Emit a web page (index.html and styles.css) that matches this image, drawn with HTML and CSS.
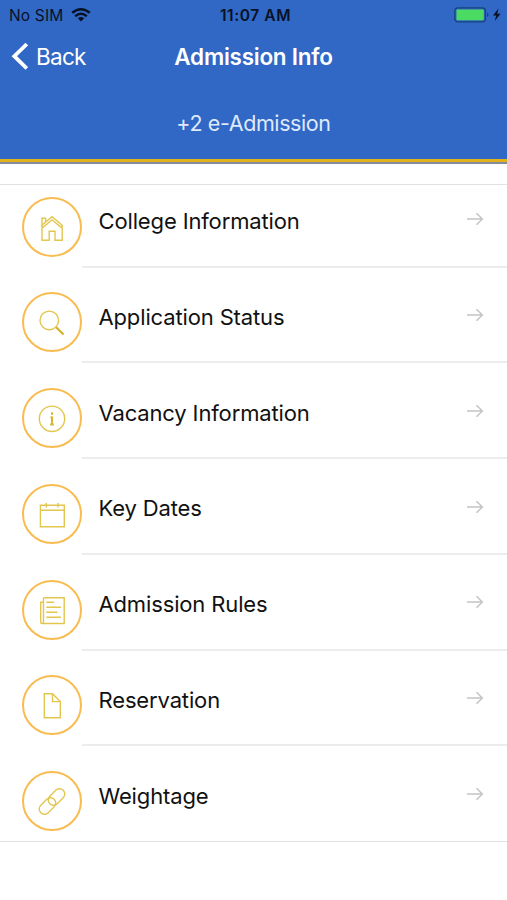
FILE: index.html
```
<!DOCTYPE html>
<html lang="en">
<head>
<meta charset="utf-8">
<title>Admission Info</title>
<link rel="stylesheet" href="styles.css">
</head>
<body>
<header class="header">
  <div class="status">
    <div class="carrier"><span class="carrier-name">No SIM</span>
      <svg width="20" height="14" viewBox="0 0 20 14" fill="none" stroke="#071225" stroke-width="2.5"><path d="M1.2 4.8Q10-2.2 18.8 4.8M4.2 8.2Q10 3.4 15.8 8.2"/><path d="M6.8 10.3Q10 7.6 13.2 10.3L10 13.6Z" fill="#071225" stroke="none"/></svg>
    </div>
    <div class="clock">11:07 AM</div>
    <svg class="battery" width="48" height="16" viewBox="0 0 48 16"><rect x=".8" y=".8" width="30.6" height="14" rx="3" fill="none" stroke="#17437f" stroke-width="1.3"/><rect x="2.5" y="2.5" width="27.3" height="10.7" rx="1" fill="#4cdb62"/><path d="M33 5.5Q36 7.8 33 10Z" fill="#17437f"/><path d="M44.5 1.5L39 8.5H42.3L40.7 14L46.5 6.7H43.2Z" fill="#071225"/></svg>
  </div>
  <nav class="nav">
    <a class="back"><svg width="18" height="28" viewBox="0 0 18 28"><path d="M16.8 2L4.3 14.2L16.8 26.4" fill="none" stroke="#fff" stroke-width="3.8"/></svg><span>Back</span></a>
    <h1 class="title">Admission Info</h1>
  </nav>
  <div class="subtitle">+2 e-Admission</div>
</header>
<svg class="defs" width="0" height="0"><symbol id="arrow" viewBox="0 0 18 14"><path d="M1 7H16M10.5 1.2L16.3 7L10.5 12.8"/></symbol></svg>
<main class="list">
  <div class="row">
    <svg class="icon" viewBox="2 2 56 56"><path d="M19 29L30 19.6L41 29M20 28.2V43.3H27.2V34.2H33V43.3H40.2V28.2M20.8 30.6L30 22.8L39.4 30.6M20 28V21.3H23.6V24.7"/></svg>
    <div class="body"><span class="label">College Information</span><svg class="arrow"><use href="#arrow"/></svg></div>
  </div>
  <div class="row">
    <svg class="icon" viewBox="2 2 56 56"><circle cx="27.3" cy="28.4" r="9.3"/><path class="handle" d="M34.2 35.2L41.5 42.5"/></svg>
    <div class="body"><span class="label">Application Status</span><svg class="arrow"><use href="#arrow"/></svg></div>
  </div>
  <div class="row">
    <svg class="icon" viewBox="2 2 56 56"><circle cx="30" cy="30.8" r="12.7"/><path class="info" d="M30 28.5V37M28.5 29.2H30M28.2 36.4H31.8M30 24.3V26.7"/></svg>
    <div class="body"><span class="label">Vacancy Information</span><svg class="arrow"><use href="#arrow"/></svg></div>
  </div>
  <div class="row">
    <svg class="icon" viewBox="2 2 56 56"><path d="M18.4 21.2H42.3V42.7H18.4ZM18.4 26.2H42.3M24.3 19V23.5M36 19V23.5"/></svg>
    <div class="body"><span class="label">Key Dates</span><svg class="arrow"><use href="#arrow"/></svg></div>
  </div>
  <div class="row">
    <svg class="icon" viewBox="2 2 56 56"><path d="M21.5 17.8H42.2V43.5H20.2Q18.7 43.5 18.7 42V22.2H21.5M21.5 17.8V41.5Q21.5 43.5 20 43.5M24.3 22.3H32M24.3 27.3H39M24.3 32.3H35.5M24.3 37.3H39"/></svg>
    <div class="body"><span class="label">Admission Rules</span><svg class="arrow"><use href="#arrow"/></svg></div>
  </div>
  <div class="row">
    <svg class="icon" viewBox="2 2 56 56"><path d="M22.3 18.8H30.5L38.3 26.6V42.8H22.3ZM30.5 18.8V26.6H38.3"/></svg>
    <div class="body"><span class="label">Reservation</span><svg class="arrow"><use href="#arrow"/></svg></div>
  </div>
  <div class="row">
    <svg class="icon" viewBox="2 2 56 56"><rect x="-9.5" y="-5.3" width="19" height="10.6" rx="5.3" transform="translate(34.5 26) rotate(-45)"/><rect x="-9.5" y="-5.3" width="19" height="10.6" rx="5.3" transform="translate(25.5 35) rotate(-45)"/></svg>
    <div class="body"><span class="label">Weightage</span><svg class="arrow"><use href="#arrow"/></svg></div>
  </div>
</main>
</body>
</html>
```
FILE: styles.css
```
* { box-sizing: border-box; }
body { margin: 0; background: #fff; color: #111; font-family: Inter, "Liberation Sans", sans-serif; }
.header { height: 164px; background: #3167c5; border-bottom: 2px solid #858a98; box-shadow: inset 0 -3px #e2b21c; }
.status { height: 30px; display: grid; grid-template-columns: 1fr 80px 1fr; align-items: center; padding: 0 5px 0 9px; color: #071225; font-size: 15.5px; }
.carrier { display: flex; align-items: center; gap: 8px; white-space: nowrap; }
.carrier-name { letter-spacing: .15px; }
.clock { font-weight: 600; text-align: center; white-space: nowrap; letter-spacing: .6px; }
.battery { justify-self: end; }
.nav { height: 54px; display: grid; grid-template-columns: 1fr 160px 1fr; align-items: center; padding: 0 10px 2px; color: #fff; }
.back { display: flex; align-items: center; gap: 8px; font-size: 22.5px; letter-spacing: -.7px; }
.title { margin: 0; font-size: 22.5px; font-weight: 600; text-align: center; white-space: nowrap; letter-spacing: -.25px; }
.subtitle { height: 78px; display: flex; align-items: center; justify-content: center; color: #dfe9fc; font-size: 21.5px; letter-spacing: -.4px; }
.defs { display: block; }
.list { margin-top: 20px; border-top: 1px solid #e1e1e3; }
.row { height: 95.75px; padding-left: 22px; display: flex; align-items: flex-start; }
.row:last-child { height: 82.5px; background: linear-gradient(#e1e1e3, #e1e1e3) bottom / 100% 1px no-repeat; }
.icon { flex: none; width: 60px; height: 60px; margin-top: 11.7px; border: 2px solid #f8bc50; border-radius: 50%; fill: none; stroke: #e3c64f; stroke-width: 1.4; }
.handle { stroke: #d5b129; stroke-width: 2.2; }
.info { stroke: #d9b52c; stroke-width: 2; }
.body { flex: 1; height: 82.7px; padding: 0 23px 0 16.5px; display: flex; align-items: flex-start; justify-content: space-between; border-bottom: 2px solid #ececee; }
.row:last-child .body { border: 0; }
.label { margin-top: 21.2px; font-size: 22px; line-height: 30px; white-space: nowrap; letter-spacing: -.14px; }
.arrow { width: 18px; height: 14px; margin-top: 27.3px; fill: none; stroke: #c4c4c6; stroke-width: 1.5; }
```
